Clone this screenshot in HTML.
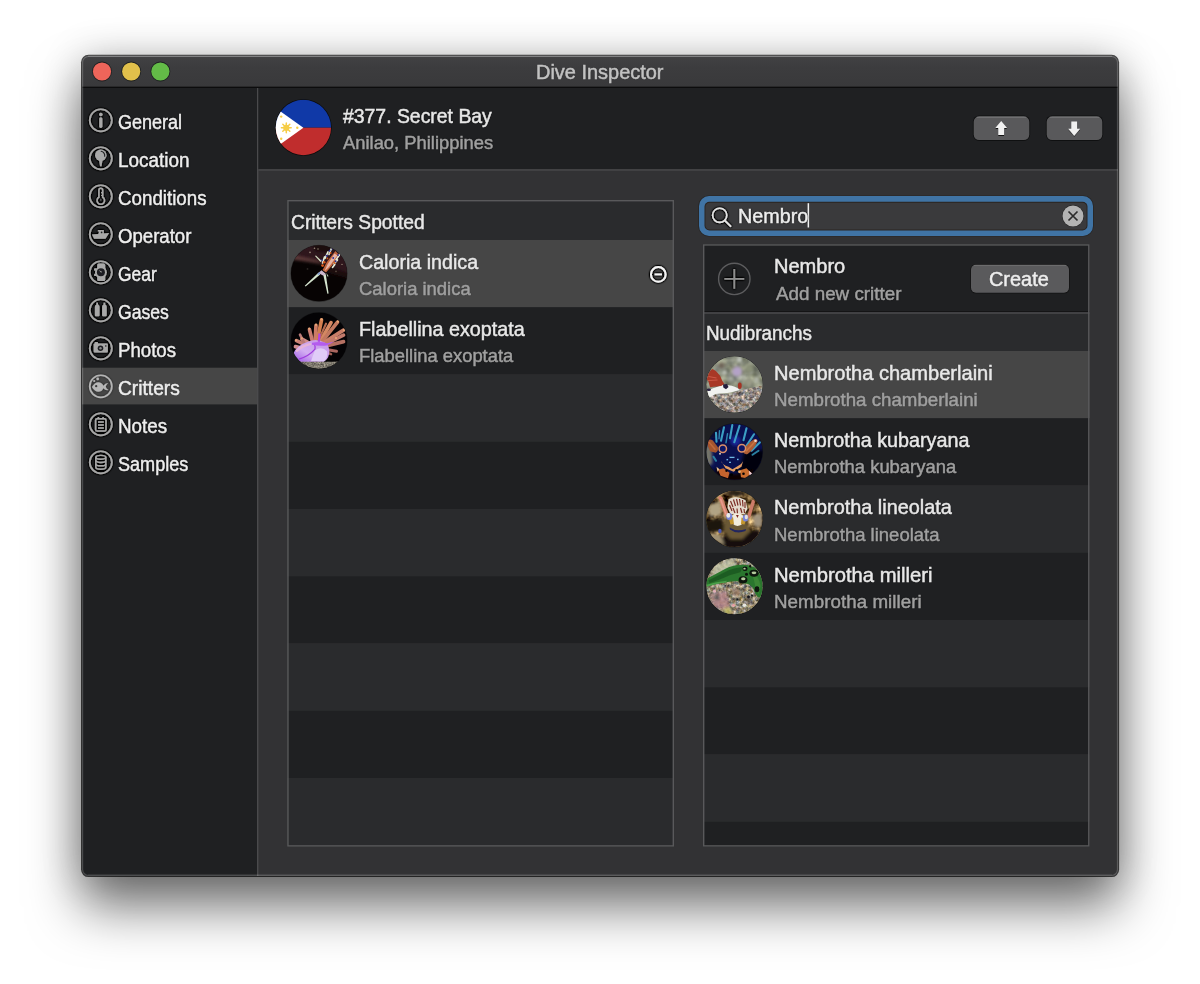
<!DOCTYPE html>
<html lang="en">
<head>
<meta charset="utf-8">
<title>Dive Inspector</title>
<style>
*{box-sizing:border-box;margin:0;padding:0}
html,body{width:1200px;height:984px;overflow:hidden;background:#fff}
body{font-family:"Liberation Sans",sans-serif;position:relative}
#shadow{position:absolute;left:82px;top:56px;width:1036px;height:820px;border-radius:7px;background:#323234;
 box-shadow:0 31px 52px 1px rgba(0,0,0,.52),0 2px 40px rgba(0,0,0,.24)}
#ui{position:absolute;left:0;top:0;display:block}
#txt{position:absolute;left:0;top:0;width:1200px;height:984px}
.t{position:absolute;white-space:nowrap;transform-origin:0 50%;line-height:24px;
 text-shadow:0 0 1.3px rgba(0,0,0,.85),0 0 1px rgba(0,0,0,.6);filter:grayscale(1);-webkit-text-stroke:.5px currentColor}
.t.hl{text-shadow:0 0 1.4px #000,0 0 1.4px #000,0 0 1px #000}
.t.sel{text-shadow:0 0 1.2px rgba(0,0,0,.45)}
</style>
</head>
<body>
<div id="shadow"></div>
<svg id="ui" width="1200" height="984" viewBox="0 0 1200 984">
<defs>
<clipPath id="winclip"><rect x="82" y="55.7" width="1036.1" height="820.4" rx="6.5"/></clipPath>
<clipPath id="tclip"><circle cx="28" cy="28" r="28.1"/></clipPath>
<linearGradient id="tbg" x1="0" y1="0" x2="0" y2="1"><stop offset="0" stop-color="#424244"/><stop offset=".4" stop-color="#3c3c3e"/><stop offset="1" stop-color="#39393b"/></linearGradient>
<filter id="halo" x="-30%" y="-30%" width="160%" height="160%"><feGaussianBlur in="SourceAlpha" stdDeviation=".8" result="b"/><feComponentTransfer in="b" result="b2"><feFuncA type="linear" slope="3.2"/></feComponentTransfer><feFlood flood-color="#000" flood-opacity=".95"/><feComposite in2="b2" operator="in" result="s"/><feMerge><feMergeNode in="s"/><feMergeNode in="SourceGraphic"/></feMerge></filter>
<filter id="bsh" x="-20%" y="-30%" width="140%" height="170%"><feGaussianBlur in="SourceAlpha" stdDeviation=".5" result="b"/><feOffset in="b" dy=".8" result="o"/><feFlood flood-color="#000" flood-opacity=".8"/><feComposite in2="o" operator="in" result="s"/><feMerge><feMergeNode in="s"/><feMergeNode in="SourceGraphic"/></feMerge></filter>
<filter id="halo2" x="-30%" y="-30%" width="160%" height="160%"><feGaussianBlur in="SourceAlpha" stdDeviation=".8" result="b"/><feComponentTransfer in="b" result="b2"><feFuncA type="linear" slope="2"/></feComponentTransfer><feFlood flood-color="#000" flood-opacity=".32"/><feComposite in2="b2" operator="in" result="s"/><feMerge><feMergeNode in="s"/><feMergeNode in="SourceGraphic"/></feMerge></filter>
</defs>
<rect x="81" y="54.7" width="1038.1" height="822.4" rx="7.5" fill="#000" fill-opacity=".7"/>
<g clip-path="url(#winclip)">
<rect x="82" y="55.7" width="1036.1" height="820.4" fill="#323234"/>
<rect x="82" y="55.7" width="1036.1" height="31" fill="url(#tbg)"/>
<rect x="82" y="86.7" width="1036.1" height="1.3" fill="#0c0c0d"/>
<rect x="82" y="88" width="175" height="788.1" fill="#1f2022"/>
<rect x="82" y="367.7" width="175" height="36.7" fill="#464646"/>
<rect x="257" y="88" width="1.4" height="788.1" fill="#4a4a4c"/>
<rect x="258.4" y="88" width="859.7" height="81.2" fill="#1f2022"/>
<rect x="258.4" y="169.2" width="859.7" height="1.5" fill="#48484a"/>
<circle cx="102" cy="71.5" r="9.9" fill="#101416" fill-opacity=".7"/><circle cx="102" cy="71.5" r="9.1" fill="#ee655a"/>
<circle cx="131.2" cy="71.5" r="9.9" fill="#101416" fill-opacity=".7"/><circle cx="131.2" cy="71.5" r="9.1" fill="#e1c04b"/>
<circle cx="160.4" cy="71.5" r="9.9" fill="#101416" fill-opacity=".7"/><circle cx="160.4" cy="71.5" r="9.1" fill="#63bb47"/>
<g transform="translate(100.8 120.3)" filter="url(#halo)"><circle r="11.05" fill="none" stroke="#a6a6a6" stroke-width="1.7"/><g fill="#a8a8a8"><circle cx="0" cy="-5.7" r="1.75"/><rect x="-1.55" y="-3.1" width="3.1" height="10.7" rx="1.55"/></g></g>
<g transform="translate(100.8 158.3)" filter="url(#halo)"><circle r="11.05" fill="none" stroke="#a6a6a6" stroke-width="1.7"/><g fill="#a8a8a8"><circle cx="0" cy="-3" r="5.7"/><path d="M-1.7,1.6 L-0.75,8 H0.75 L1.7,1.6 Z"/></g><path d="M0.4,-7 A4.3,4.3 0 0 1 3.9,-2" fill="none" stroke="#1b1c1e" stroke-width="1.1" stroke-linecap="round"/></g>
<g transform="translate(100.8 196.3)" filter="url(#halo)"><circle r="11.05" fill="none" stroke="#a6a6a6" stroke-width="1.7"/><g fill="none" stroke="#a8a8a8" stroke-width="1.5"><path d="M-1.9,0.95 V-6.1 a1.9,1.9 0 0 1 3.8,0 V0.95 A3.75,3.75 0 1 1 -1.9,0.95 Z"/><path d="M0.3,-3.6 H1.9 M0.3,-0.8 H1.9" stroke-width="1.2"/></g><rect x="-0.45" y="2.6" width=".9" height="1.8" fill="#6a6a6c"/></g>
<g transform="translate(100.8 234.3)" filter="url(#halo)"><circle r="11.05" fill="none" stroke="#a6a6a6" stroke-width="1.7"/><g fill="#a8a8a8"><path d="M-8.8,0.2 L-2.4,-0.4 L-1.6,-2.9 H-2.9 V-4.3 H3 V-0.9 L8.3,-1.4 L4.7,4.4 H-6.7 Z"/></g><circle cx="0.8" cy="-1.9" r="0.85" fill="#1f2022"/></g>
<g transform="translate(100.8 272.3)" filter="url(#halo)"><circle r="11.05" fill="none" stroke="#a6a6a6" stroke-width="1.7"/><g fill="#a8a8a8"><rect x="-3.6" y="-8.9" width="8" height="17.6" rx="1.6"/><circle cx="0.1" cy="0" r="5.9"/><circle cx="-5.6" cy="-2.8" r="1.2"/><circle cx="-5.6" cy="2.6" r="1.2"/></g><circle cx="0.1" cy="0" r="4" fill="#1d1e20"/><path d="M0.4,0.4 L-2.2,-2.4 L1.2,-0.5 Z" fill="#a8a8a8"/></g>
<g transform="translate(100.8 310.3)" filter="url(#halo)"><circle r="11.05" fill="none" stroke="#a6a6a6" stroke-width="1.7"/><g fill="#a8a8a8"><path d="M-5.9,-3.6 Q-5.9,-5.2 -4.4,-5.9 V-7.6 H-2.8 V-5.9 Q-1.3,-5.2 -1.3,-3.6 V4.9 Q-1.3,5.9 -2.3,5.9 H-4.9 Q-5.9,5.9 -5.9,4.9 Z"/><path d="M1.3,-3.6 Q1.3,-5.2 2.8,-5.9 V-7.6 H4.4 V-5.9 Q5.9,-5.2 5.9,-3.6 V4.9 Q5.9,5.9 4.9,5.9 H2.3 Q1.3,5.9 1.3,4.9 Z"/></g></g>
<g transform="translate(100.8 348.3)" filter="url(#halo)"><circle r="11.05" fill="none" stroke="#a6a6a6" stroke-width="1.7"/><g fill="#a8a8a8"><rect x="-7.1" y="-4.8" width="14.2" height="9" rx="1.1"/><rect x="-6.1" y="-6.2" width="3.4" height="2.4" rx="0.8"/></g><circle cx="-0.3" cy="-0.1" r="2.8" fill="#1d1e20"/><circle cx="-0.3" cy="-0.1" r="1.2" fill="#8a8a8a"/><rect x="4.2" y="-3.1" width="1.5" height="1.5" fill="#3a3a3c"/></g>
<g transform="translate(100.8 386.3)" filter="url(#halo2)"><circle r="11.05" fill="none" stroke="#b4b4b4" stroke-width="1.7"/><g fill="#b6b6b6"><path d="M-8.9,0.7 Q-6,-4.1 -2.6,-4.1 Q1.2,-4.1 2.6,-0.6 Q4.6,-3.4 7.3,-3.2 Q5.2,-1.2 4.9,0.5 Q5.4,2.4 7.7,3.8 Q4.4,4.4 2.6,2 Q1.2,5.5 -2.6,5.5 Q-6,5.5 -8.9,0.7 Z"/><circle cx="-3.1" cy="-7.4" r="1.35"/><circle cx="-6.6" cy="-5.3" r="1"/></g><circle cx="-4.6" cy="-0.1" r="1.15" fill="#3a3a3a"/></g>
<g transform="translate(100.8 424.3)" filter="url(#halo)"><circle r="11.05" fill="none" stroke="#a6a6a6" stroke-width="1.7"/><g fill="none" stroke="#a8a8a8" stroke-width="1.5"><rect x="-5.2" y="-5.6" width="10.4" height="12.4" rx="1.6"/><path d="M-2.4,-7.4 V-5.6 M2.3,-7.4 V-5.6" stroke-width="1.4"/><path d="M-2.8,-2.3 H3 M-2.8,0.7 H3 M-2.8,3.7 H3" stroke-width="1.3"/></g></g>
<g transform="translate(100.8 462.3)" filter="url(#halo)"><circle r="11.05" fill="none" stroke="#a6a6a6" stroke-width="1.7"/><g fill="none" stroke="#a8a8a8" stroke-width="1.4"><ellipse cx="0" cy="-5" rx="5" ry="1.9"/><path d="M-5,-5 V5 A5,1.9 0 0 0 5,5 V-5"/><path d="M-5,-1.7 A5,1.9 0 0 0 5,-1.7 M-5,1.6 A5,1.9 0 0 0 5,1.6"/></g></g>
<g transform="translate(275.4 99.5)"><defs><clipPath id="fc"><circle cx="28" cy="28" r="27.7"/></clipPath></defs><circle cx="28" cy="28" r="28.3" fill="#0a0a0b"/><g clip-path="url(#fc)"><rect x="0" y="0" width="56" height="28.2" fill="#1039a7"/><rect x="0" y="28.2" width="56" height="28" fill="#c02d2d"/><path d="M-20,-6 L28,28.2 L-20,62.4 Z" fill="#ffffff"/><g fill="#f6cd46"><circle cx="10.9" cy="28.3" r="3.1"/><g stroke="#f6cd46" stroke-width="1.5" stroke-linecap="round"><path d="M10.9,23.4 V33.2 M6,28.3 H15.8 M7.4,24.8 L14.4,31.8 M14.4,24.8 L7.4,31.8"/></g><circle cx="5.8" cy="17.1" r="1.2"/><circle cx="21.9" cy="28.2" r="1.2"/><circle cx="5.8" cy="39.2" r="1.2"/></g></g></g>
<g><rect x="972.9" y="115.5" width="57.2" height="25.4" rx="6.3" fill="#0b0b0c" fill-opacity=".75"/><rect x="973.7" y="116.3" width="55.6" height="23.7" rx="5.5" fill="#59595b"/><rect x="976.5" y="116.6" width="50" height="1.1" fill="#fff" fill-opacity=".2"/><rect x="1045.9" y="115.5" width="57.2" height="25.4" rx="6.3" fill="#0b0b0c" fill-opacity=".75"/><rect x="1046.7" y="116.3" width="55.6" height="23.7" rx="5.5" fill="#59595b"/><rect x="1049.5" y="116.6" width="50" height="1.1" fill="#fff" fill-opacity=".2"/><g filter="url(#bsh)" fill="#f1f1f1"><path transform="translate(1001.2 116.3)" d="M0,4.7 L5.9,11.7 H2.85 V18.8 H-2.85 V11.7 H-5.9 Z"/><path transform="translate(1074.2 116.3)" d="M0,19.4 L5.9,12.4 H2.85 V5.3 H-2.85 V12.4 H-5.9 Z"/></g></g>
<rect x="287.25" y="200" width="386.75" height="40" fill="#2a2b2d"/><rect x="287.25" y="240" width="386.75" height="67.25" fill="#464646"/><rect x="287.25" y="307.25" width="386.75" height="67.25" fill="#1f2022"/><rect x="287.25" y="374.5" width="386.75" height="67.25" fill="#2a2b2d"/><rect x="287.25" y="441.75" width="386.75" height="67.25" fill="#1f2022"/><rect x="287.25" y="509" width="386.75" height="67.25" fill="#2a2b2d"/><rect x="287.25" y="576.25" width="386.75" height="67.25" fill="#1f2022"/><rect x="287.25" y="643.5" width="386.75" height="67.25" fill="#2a2b2d"/><rect x="287.25" y="710.75" width="386.75" height="67.25" fill="#1f2022"/><rect x="287.25" y="778" width="386.75" height="68.6" fill="#2a2b2d"/>
<rect x="703" y="244.25" width="386.5" height="68.75" fill="#1f2022"/><rect x="703" y="313" width="386.5" height="38" fill="#2a2b2d"/><rect x="703" y="351" width="386.5" height="67.25" fill="#464646"/><rect x="703" y="418.25" width="386.5" height="67.25" fill="#1f2022"/><rect x="703" y="485.5" width="386.5" height="67.25" fill="#2a2b2d"/><rect x="703" y="552.75" width="386.5" height="67.25" fill="#1f2022"/><rect x="703" y="620" width="386.5" height="67.25" fill="#2a2b2d"/><rect x="703" y="687.25" width="386.5" height="67.25" fill="#1f2022"/><rect x="703" y="754.5" width="386.5" height="67.25" fill="#2a2b2d"/><rect x="703" y="821.75" width="386.5" height="24.85" fill="#1f2022"/>
<rect x="703" y="311.2" width="386.5" height="0.9" fill="#121213"/>
<rect x="703" y="312.1" width="386.5" height="1.8" fill="#454547"/>
<rect x="287.95" y="200.7" width="385.35" height="645.2" fill="none" stroke="#59595b" stroke-width="1.4"/>
<rect x="703.7" y="244.95" width="385.1" height="600.95" fill="none" stroke="#59595b" stroke-width="1.4"/>
<g transform="translate(291 245.4)"><circle cx="28" cy="28" r="28.6" fill="#000" fill-opacity=".35"/><g clip-path="url(#tclip)"><defs><filter id="b1" x="-20%" y="-20%" width="140%" height="140%"><feGaussianBlur stdDeviation="0.6"/></filter><filter id="b2" x="-30%" y="-30%" width="160%" height="160%"><feGaussianBlur stdDeviation="1.7"/></filter><filter id="b3" x="-30%" y="-30%" width="160%" height="160%"><feGaussianBlur stdDeviation="1"/></filter><filter id="b4" x="-30%" y="-30%" width="160%" height="160%"><feGaussianBlur stdDeviation=".75"/></filter></defs>
<rect width="56" height="56" fill="#070303"/>
<g filter="url(#b2)"><path d="M-2,-2 H58 V27.5 L30,18.5 L4,11.5 L-2,13 Z" fill="#2d191a"/><path d="M2,9.5 L26,15 L31,18.5 L12,15.5 L1,14 Z" fill="#5e3a3a"/><path d="M34,22 L58,27 V33 L36,27 Z" fill="#1d0f10"/><path d="M20,-2 H44 L40,8 L24,6 Z" fill="#1c0f10"/></g>
<g filter="url(#b1)"><g fill="#9a8a7a"><circle cx="19" cy="7" r=".8"/><circle cx="23.5" cy="2.8" r=".8"/><circle cx="27" cy="3.6" r=".7"/><circle cx="51" cy="19" r=".7"/><circle cx="45" cy="26" r=".8" fill="#5a4a40"/><circle cx="16.5" cy="23.5" r=".9" fill="#2c2622"/></g>
<path d="M44.5,5.5 L48,9.5 L41,20 L35,27 L31.5,24.5 L36.5,15.5 Z" fill="#c2653e"/><path d="M43.5,8 L46.3,10.2 L38,21.5 L33.5,25.8 L36.5,19 Z" fill="#e4b4a6"/>
<g stroke="#e6eedc" stroke-width="1.6" stroke-linecap="round" fill="none"><path d="M40.5,3 L38,9"/><path d="M37,6.5 L34,13"/><path d="M33.5,11.5 L31.5,17.5"/><path d="M48.5,9.5 L45,14.5"/><path d="M46.5,14.5 L43,18.5"/><path d="M49.5,7 L47.5,10.5"/><path d="M43.8,19 L41.5,22"/></g>
<g fill="#2e2f92"><circle cx="41.5" cy="3.2" r="1.05"/><circle cx="38.6" cy="5.3" r=".95"/><circle cx="35.8" cy="10.3" r="1.05"/><circle cx="42.2" cy="12.6" r=".9"/><circle cx="30.6" cy="14.8" r="1.05"/><circle cx="47" cy="9.6" r=".95"/><circle cx="44.7" cy="15.8" r=".95"/><circle cx="49.6" cy="6.4" r=".8"/></g>
<g fill="#d4581c"><circle cx="39.6" cy="7.6" r="1.05"/><circle cx="33.2" cy="16.8" r="1.3"/><circle cx="47.6" cy="5.4" r=".9"/><circle cx="43.6" cy="17.6" r=".95"/><circle cx="31.6" cy="20.2" r="1.4"/><circle cx="36.4" cy="13" r=".9"/></g>
<path d="M29.5,16.5 L24,10.5 L24.9,10.2 L30.8,15.6 Z" fill="#d9e4c8"/><path d="M27.6,27.2 L13.8,40.4 L14.6,41 L29.2,29 Z" fill="#d6e6d0"/><path d="M32.2,29 L36.4,48.3 L37.6,48 L34.8,28.8 Z" fill="#d6e6d0"/><path d="M35.3,27.4 L37.6,30.8 L36.3,31.2 Z" fill="#c5d8c0"/><path d="M27.4,27.6 L30.5,24.8 L35,28.6 L32.4,30.4 Z" fill="#cdb8cc"/><path d="M26,28.8 L29.4,26 L28.2,29.6 Z" fill="#7f9ad8"/></g></g></g>
<g transform="translate(291 312.65)"><circle cx="28" cy="28" r="28.6" fill="#000" fill-opacity=".35"/><g clip-path="url(#tclip)"><defs><filter id="n2" x="0" y="0" width="100%" height="100%" color-interpolation-filters="sRGB"><feTurbulence type="fractalNoise" baseFrequency="0.6" numOctaves="2" seed="3"/><feColorMatrix values="1.1 0 0 0 0  1.05 0 0 0 0  0.95 0 0 0 0  0 0 0 0 1"/></filter><linearGradient id="g2a" x1="0" y1="1" x2="1" y2="0"><stop offset="0" stop-color="#9c55e4"/><stop offset=".4" stop-color="#d3aef2"/><stop offset="1" stop-color="#c392e6"/></linearGradient></defs>
<rect width="56" height="56" fill="#040305"/>
<g filter="url(#b4)"><g stroke-linecap="round" fill="none" stroke-width="3.7"><path d="M26,29 L30.5,7.5" stroke="#d27e50"/><path d="M24,30 L25,13" stroke="#cc7c66"/><path d="M22,31 L18.5,17" stroke="#c97c70"/><path d="M29,29 L40,10" stroke="#d48862"/><path d="M31,29 L46.5,9.5" stroke="#c2785e"/><path d="M32,30.5 L52.5,17.5" stroke="#c97e68"/><path d="M33,32 L52.5,22.5" stroke="#c27a6c"/><path d="M34,33.5 L52.5,29" stroke="#b47062"/><path d="M34,36.5 L45.5,38.5" stroke="#a8665e" stroke-width="3"/><path d="M20,31.5 L11,26.5" stroke="#d08c88"/><path d="M17,33.5 L5.5,28" stroke="#c78074"/><path d="M14,36.5 L4.5,34" stroke="#cf8c8c"/><path d="M36,40 L40,41.5" stroke="#a06054" stroke-width="2.6"/><path d="M27,29 L35,11" stroke="#b46a50" stroke-width="2.2"/><path d="M14,32 L9,22" stroke="#b87a78" stroke-width="2.6"/></g>
<g fill="#e8a474"><circle cx="30.6" cy="6.6" r="1.2"/><circle cx="25" cy="12" r="1.2"/><circle cx="18.2" cy="16" r="1.1"/><circle cx="47" cy="8.8" r="1.2"/><circle cx="53" cy="17.2" r="1.2"/><circle cx="45" cy="25.4" r="1.1"/><circle cx="5" cy="27.6" r="1.1"/><circle cx="10.8" cy="25.8" r="1.1"/></g></g>
<g filter="url(#b4)"><path d="M2.5,40.5 Q6,32.5 17,29 Q26,25.5 34,30 Q39.5,33.5 38,41.5 Q37,47 32,49.5 L10,49.5 Q4,46.5 2.5,40.5 Z" fill="url(#g2a)"/><path d="M21,30 Q30,28.5 36,30.5 L43,29 L36,32.8 Q28,33.8 21,32.2 Z" fill="#b45cee"/><path d="M27.4,20.5 L29.6,21 L29,29 L26.8,29 Z" fill="#b344e4"/><path d="M8,46.5 Q18,43.5 24,36.5 Q24.5,33.5 23.5,32.5" fill="none" stroke="#a03ede" stroke-width="1.3"/><path d="M24,37.5 Q31,33.5 36,38.5 Q37,44.5 33,48.5 L20,48.5 Q22,42.5 24,37.5 Z" fill="#e0ccf8"/><path d="M6,38 Q12,33 19,31.5" fill="none" stroke="#e6b4d8" stroke-width="2.4" stroke-linecap="round"/></g>
<g clip-path="polygon(0 87.5%, 100% 87.5%, 100% 100%, 0 100%)"><rect width="56" height="56" filter="url(#n2)"/><rect width="56" height="56" fill="#6a665e" opacity=".35"/></g></g></g>
<g transform="translate(706.5 356.5)"><circle cx="28" cy="28" r="28.6" fill="#000" fill-opacity=".35"/><g clip-path="url(#tclip)"><defs><filter id="n3" x="0" y="0" width="100%" height="100%" color-interpolation-filters="sRGB"><feTurbulence type="fractalNoise" baseFrequency="0.11" numOctaves="2" seed="8"/><feColorMatrix values="0.6 0.1 0 0 0.2  0.6 0.1 0 0 0.22  0.55 0 0.1 0 0.17  0 0 0 0 1"/></filter><filter id="n3b" x="0" y="0" width="100%" height="100%" color-interpolation-filters="sRGB"><feTurbulence type="fractalNoise" baseFrequency="0.28" numOctaves="3" seed="21"/><feColorMatrix values="0.95 0.35 0 0 -0.07  0.95 0.1 0 0 0.02  0.95 0 0.25 0 -0.08  0 0 0 0 1"/></filter></defs>
<rect width="56" height="56" fill="#8c9182"/><rect width="56" height="56" filter="url(#n3)" opacity=".9"/>
<g filter="url(#b2)"><circle cx="30.5" cy="15" r="5" fill="#b4a2c8"/><circle cx="18" cy="16" r="2.4" fill="#c2c6bc"/><circle cx="24" cy="22" r="2" fill="#bcc0b4"/><circle cx="33" cy="3" r="2.6" fill="#c8ccc2"/><circle cx="50" cy="23" r="2.4" fill="#b4b8ae"/><circle cx="15" cy="9" r="3" fill="#6c6054"/><circle cx="43" cy="12" r="4" fill="#8a9078"/><circle cx="42" cy="26" r="3" fill="#9a9a86"/></g>
<g clip-path="polygon(0 75%, 12% 68%, 46% 66%, 62% 60%, 100% 52%, 100% 100%, 0 100%)"><rect width="56" height="56" filter="url(#n3b)"/></g>
<g filter="url(#b1)"><path d="M1,34 Q8,31 16,28.5 Q25,28 31,31.5 L33,33.5 Q27,35.5 21,36.5 L9,37.5 L3,41 L0.5,37 Z" fill="#f1f2f0"/><path d="M3.5,30.8 L2,25 L-0.5,22 L0.5,16.5 L6,12.4 L9.4,14.6 L13.6,19.3 L15.6,24 L18,27.6 L14.5,29.4 L9,30 Z" fill="#a83826"/><path d="M2,20 L10,21.5 M1.5,24 L11,23.5" stroke="#cc5a48" stroke-width="1.1" fill="none"/><path d="M16.5,28 L20.5,27.5 L22,30.5 L19.5,32.8 L16.8,31 Z" fill="#241d3c"/><ellipse cx="2.3" cy="33.3" rx="2.2" ry="1.2" fill="#2a2440"/><ellipse cx="33.3" cy="29.2" rx="1.9" ry="3.3" fill="#a53222"/></g></g></g>
<g transform="translate(706.5 423.75)"><circle cx="28" cy="28" r="28.6" fill="#000" fill-opacity=".35"/><g clip-path="url(#tclip)"><rect width="56" height="56" fill="#091050"/>
<g filter="url(#b2)"><path d="M38,28 L58,26 V58 H30 Z" fill="#030509"/><path d="M-2,22 L5,22 L6,40 L-2,44 Z" fill="#75756a"/><circle cx="29" cy="17" r="5" fill="#18289a"/><path d="M8,44 L20,50 L36,50 L48,44 L44,58 H12 Z" fill="#080505"/><path d="M-2,-2 H20 L10,14 L-2,16 Z" fill="#0b1030"/></g>
<g filter="url(#b1)"><g stroke="#3b9fc4" stroke-width="2.1" stroke-linecap="round" fill="none"><path d="M17.5,3.5 L14.5,17"/><path d="M25.8,1.4 L23.5,14.5"/><path d="M33,2 L27.8,18.5"/><path d="M40,4.5 L37,16.5"/><path d="M47.5,10.5 L40,22"/><path d="M53.5,18.5 L45,27"/><path d="M9.5,9 L10,18"/><path d="M52,27 L46,31" stroke="#2a7fa0"/><path d="M7,33 L9.5,37" stroke="#2a7fa0"/><path d="M21,10 L19.5,19" stroke="#2f86b0" stroke-width="1.5"/><path d="M13,7 L12.5,15" stroke="#2f86b0" stroke-width="1.4"/></g>
<path d="M0.8,16.8 Q3.4,14.6 6.4,16.8 L11.4,23.6 Q12,27.8 9.2,29 L3.6,27.4 Q0.4,22 0.8,16.8 Z" fill="#a4542e"/><path d="M2.5,18.5 L8.5,25.5" stroke="#c06a3c" stroke-width="1.6" stroke-linecap="round"/><path d="M36.6,27.8 Q39.6,20.6 47.6,15.6 Q50.6,14.6 51.2,17.2 Q47.6,25.6 41.2,30.2 Q37.6,31.2 36.6,27.8 Z" fill="#ac5c34"/><path d="M40,27 L48,18.5" stroke="#c87444" stroke-width="1.6" stroke-linecap="round"/><circle cx="49" cy="17" r="1.3" fill="#f2e0dc"/>
<circle cx="16.3" cy="25" r="3.7" fill="#0d1565" stroke="#dd9068" stroke-width="1.5"/><circle cx="35.3" cy="24.5" r="3.8" fill="#0d1565" stroke="#dd9068" stroke-width="1.5"/>
<g fill="#6fb8e6"><rect x="23" y="33" width="5" height="1.3"/><rect x="20" y="35.2" width="1.6" height="1.4"/><rect x="30.5" y="35" width="1.6" height="1.4"/><rect x="22.5" y="38" width="2" height="1.2"/></g>
<path d="M14.5,37 Q15.5,41 22,43 L26,45.5 L31,42.5 Q35,41 36.5,37.5 L35,43 L27,48 L19,44.5 Z" fill="#e49c62"/><path d="M11.5,46 L17,44.5 L23,49 L21.5,54.5 L14,52 Z" fill="#c4642e"/><path d="M33.5,46.5 L40,44.5 L44.5,49 L40,54.5 L34.5,53.5 Z" fill="#cb6e2f"/><circle cx="33" cy="48" r="1.4" fill="#f0b06a"/><path d="M42.5,47 L46,50 L43,52 Z" fill="#f2d0d6"/><path d="M10,43 L13,45.5 L11,48 Z" fill="#e8c090"/><circle cx="13.5" cy="30" r=".9" fill="#e8e0d0"/><g fill="#060406"><circle cx="20" cy="47" r="1.2"/><circle cx="25" cy="51" r="1.6"/><circle cx="37" cy="50" r="1.3"/><circle cx="30" cy="46.5" r="1.3"/></g></g></g></g>
<g transform="translate(706.5 491)"><circle cx="28" cy="28" r="28.6" fill="#000" fill-opacity=".35"/><g clip-path="url(#tclip)"><defs><filter id="n5" x="0" y="0" width="100%" height="100%" color-interpolation-filters="sRGB"><feTurbulence type="fractalNoise" baseFrequency="0.12" numOctaves="3" seed="14"/><feColorMatrix values="1.9 0 0 0 -0.5  1.7 0 0 0 -0.5  1.3 0 0 0 -0.45  0 0 0 0 1"/></filter></defs>
<rect width="56" height="56" fill="#6b5a3a"/><rect width="56" height="56" filter="url(#n5)"/>
<g filter="url(#b2)"><path d="M-2,30 L16,27 L18,40 L-2,41 Z" fill="#1f180e"/><path d="M10,50 L24,40 L40,42 L52,38 L58,58 H8 Z" fill="#120d08"/><path d="M18,28 Q28,22 40,28 L44,40 L36,48 L24,48 L17,40 Z" fill="#6a5836"/><path d="M2,14 L14,10 L15,24 L3,26 Z" fill="#b0a384"/><path d="M1,42 L14,44 L18,54 L6,50 Z" fill="#a09274"/><path d="M46,24 L56,22 L56,36 L48,36 Z" fill="#a0937e"/><path d="M16,2 L30,-2 L40,2 L30,6 Z" fill="#2a2016"/></g>
<g filter="url(#b1)"><path d="M22,8 Q30,4 39,9 L41,18 L38,23 L24,23 L21,17 Z" fill="#e4dacc"/><g stroke="#7a2a22" stroke-width="1.15" fill="none"><path d="M24,10 L26.5,16"/><path d="M27,8.5 L29,15"/><path d="M30,8 L31.5,14.5"/><path d="M33,8 L34,14.5"/><path d="M36,9 L36.5,15.5"/><path d="M38.5,11 L38.5,17"/><path d="M23,14 L25.5,20"/><path d="M26.5,17 L28.5,22"/><path d="M34,17 L35.5,22"/><path d="M30.5,17.5 L31,22.5"/><path d="M37.5,18 L38,22"/></g>
<path d="M11.5,6 Q14,4.5 16,6.5 L22.5,24 Q21,26.5 18.5,25 Z" fill="#d4826e"/><path d="M45.5,9 Q48,8 48.5,11 L44,26 Q42,28 40.5,25.5 Z" fill="#cd7b68"/><path d="M13,7.5 L15,8 L20,23 L18.8,23.5 Z" fill="#e69c8c"/>
<path d="M24,27 Q26,22 31,22.5 Q36,22 38,27 Q37.5,34 31,35 Q25,34 24,27 Z" fill="#f2ecdc"/><path d="M22.5,28 L26.5,26 L27.5,33 L24,33.5 Z" fill="#c4962f"/><path d="M35,26.5 L39.5,28.5 L38,33.5 L34.5,33 Z" fill="#c4962f"/><ellipse cx="22.8" cy="25.6" rx="3" ry="3.5" fill="#7884d8"/><ellipse cx="21.8" cy="24.4" rx="1.9" ry="2.3" fill="#eeece6"/><ellipse cx="39" cy="27" rx="2.8" ry="3.5" fill="#7884d8"/><ellipse cx="39.8" cy="26" rx="1.6" ry="2.2" fill="#e6e2de"/>
<path d="M23,36.5 Q30,41 39.5,38 L39,40 Q30,43.5 23.5,38.5 Z" fill="#24265e"/><ellipse cx="13.4" cy="40" rx="1.7" ry="2.2" fill="#4a56b0"/><path d="M29.5,24 L31,27 L32.2,24" fill="#7a2a22"/></g></g></g>
<g transform="translate(706.5 558.25)"><circle cx="28" cy="28" r="28.6" fill="#000" fill-opacity=".35"/><g clip-path="url(#tclip)"><defs><filter id="n6" x="0" y="0" width="100%" height="100%" color-interpolation-filters="sRGB"><feTurbulence type="fractalNoise" baseFrequency="0.3" numOctaves="3" seed="5"/><feColorMatrix values="0.9 0.4 0 0 -0.09  0.9 0.15 0 0 0.005  0.9 0 0.3 0 -0.15  0 0 0 0 1"/></filter></defs>
<rect width="56" height="56" fill="#8e8872"/><rect width="56" height="56" filter="url(#n6)"/>
<g filter="url(#b2)" opacity=".8"><path d="M4,8 L26,0 L30,10 L8,20 Z" fill="#c6c8aa"/><path d="M3,36 L20,32 L24,52 L8,50 Z" fill="#b8868c"/><circle cx="21" cy="53" r="4" fill="#c0ba60"/><circle cx="10" cy="39" r="3" fill="#54585c"/><circle cx="42" cy="41" r="2.5" fill="#3a3038"/><circle cx="30" cy="34" r="4" fill="#9a7a6a"/></g>
<g filter="url(#b1)"><path d="M-1,21 Q9,16 18,11 Q26,6.5 35,6.5 Q44,6 49,10 Q54,14 55.5,22 Q57,30 55,39.5 L51.5,39 Q48.5,36 47,31 Q45,26.5 40.5,25.5 Q35,25.5 32,23 Q26,22.5 20,24 Q11,24.5 5,27 L-1,28 Z" fill="#2c762d"/><path d="M2,22 Q12,17 22,12 Q30,9 36,9 L34,14 Q24,16 14,21 L3,25 Z" fill="#1f5c24"/><path d="M48,16 Q53,20 54,28 L52,36 L49,30 Q48,22 46,18 Z" fill="#3a8636"/><path d="M0,26.5 Q10,23.5 20,22.5 L20,24 Q10,25 0,28.5 Z" fill="#49a04a"/>
<g fill="#0b120c"><ellipse cx="38.5" cy="10.5" rx="2.6" ry="2.2"/><ellipse cx="47.5" cy="15" rx="4.6" ry="3.4"/><ellipse cx="36.5" cy="21.5" rx="4.4" ry="3.6"/><ellipse cx="50.5" cy="31" rx="2.3" ry="3"/><circle cx="44" cy="8" r="1.3"/><circle cx="40" cy="16" r="1.5"/></g><g fill="#b4ca9c"><ellipse cx="38" cy="10.4" rx="1.2" ry=".9"/><ellipse cx="47.5" cy="14.6" rx="2.4" ry="1.4"/><ellipse cx="36.8" cy="20.6" rx="2.2" ry="1.5"/><circle cx="45.5" cy="7.6" r=".9"/></g>
<g fill="#16181c"><circle cx="42" cy="38.5" r="1.5"/><circle cx="45.5" cy="37" r="1.1"/><circle cx="31" cy="41" r="1"/></g><circle cx="45.8" cy="35.3" r=".9" fill="#e6e6e6"/><circle cx="8" cy="33" r="1.6" fill="#e0b0b8"/><circle cx="27" cy="47" r="1.6" fill="#e6a0a8"/><circle cx="38" cy="47" r="1.8" fill="#e6e6e0"/></g></g></g>
<g transform="translate(658.3 274.4)" filter="url(#halo)"><circle r="7.35" fill="none" stroke="#f4f4f4" stroke-width="2"/><rect x="-3.7" y="-0.9" width="7.4" height="1.8" fill="#f4f4f4"/></g>
<g><rect x="698.3" y="195.4" width="395.4" height="41.2" rx="10.6" fill="#1c1714" fill-opacity=".5"/><rect x="699" y="196.1" width="394" height="39.9" rx="10" fill="#4074a5"/><rect x="704.5" y="201.8" width="383" height="28.7" rx="5" fill="#2a2421"/><rect x="705.4" y="202.7" width="381.2" height="26.9" rx="4.2" fill="#3a3a3c"/><g filter="url(#halo)" fill="none" stroke="#e4e4e4"><circle cx="719.7" cy="215.3" r="7.1" stroke-width="1.6"/><path d="M724.9,220.6 L730.5,226.2" stroke-width="1.9" stroke-linecap="round"/></g><rect x="807.6" y="203.2" width="1.5" height="24.3" fill="#f0f0f0"/><g transform="translate(1073 216)"><circle r="10.9" fill="#222"/><circle r="10.5" fill="#b3b3b3"/><path d="M-4.5,-4.5 L4.5,4.5 M4.5,-4.5 L-4.5,4.5" stroke="#2c2c2c" stroke-width="1.7" fill="none"/></g></g>
<g transform="translate(734.3 278.9)"><circle r="15.7" fill="none" stroke="#5c5c5e" stroke-width="1.4"/><path d="M-9.9,0 H9.9 M0,-9.9 V9.9" stroke="#8e8e8e" stroke-width="1.7" fill="none" filter="url(#halo)"/></g>
<g><rect x="970.2" y="264" width="99.6" height="29.6" rx="5.8" fill="#0b0b0c" fill-opacity=".6"/><rect x="971" y="264.8" width="98" height="28" rx="5" fill="#5a5a5c"/><rect x="973.5" y="264.8" width="93" height="1" fill="#fff" fill-opacity=".14"/></g>
</g>
<rect x="82.6" y="56.3" width="1034.9" height="819.2" rx="6" fill="none" stroke="#fff" stroke-opacity=".2" stroke-width="1.2"/>
<rect x="88" y="55.7" width="1024.1" height="1.3" fill="#fff" fill-opacity=".18"/>
<rect x="88" y="873.9" width="1024.1" height="1" fill="#fff" fill-opacity=".1"/>
</svg>
<div id="txt">
<span id="title" class="t sel" style="left:535.93px;top:60px;font-size:20.3px;color:#c2c2c2;transform:scaleX(0.9834);">Dive Inspector</span>
<span id="sb0" class="t hl" style="left:118.10px;top:110px;font-size:20px;color:#eeeeee;transform:scaleX(0.901);">General</span>
<span id="sb1" class="t hl" style="left:117.87px;top:148px;font-size:20px;color:#eeeeee;transform:scaleX(0.9472);">Location</span>
<span id="sb2" class="t hl" style="left:118.26px;top:186px;font-size:20px;color:#eeeeee;transform:scaleX(0.9372);">Conditions</span>
<span id="sb3" class="t hl" style="left:117.93px;top:224px;font-size:20px;color:#eeeeee;transform:scaleX(0.9293);">Operator</span>
<span id="sb4" class="t hl" style="left:117.98px;top:262px;font-size:20px;color:#eeeeee;transform:scaleX(0.8707);">Gear</span>
<span id="sb5" class="t hl" style="left:117.97px;top:300px;font-size:20px;color:#eeeeee;transform:scaleX(0.8803);">Gases</span>
<span id="sb6" class="t hl" style="left:117.89px;top:338px;font-size:20px;color:#eeeeee;transform:scaleX(0.9316);">Photos</span>
<span id="sb7" class="t sel" style="left:117.99px;top:376px;font-size:20px;color:#eeeeee;transform:scaleX(0.9587);">Critters</span>
<span id="sb8" class="t hl" style="left:117.87px;top:414px;font-size:20px;color:#eeeeee;transform:scaleX(0.9415);">Notes</span>
<span id="sb9" class="t hl" style="left:117.93px;top:452px;font-size:20px;color:#eeeeee;transform:scaleX(0.904);">Samples</span>
<span id="htitle" class="t " style="left:343.32px;top:104px;font-size:20.6px;color:#e8e8e8;transform:scaleX(0.9419);">#377. Secret Bay</span>
<span id="hsub" class="t " style="left:342.93px;top:131px;font-size:18.8px;color:#a0a0a0;transform:scaleX(0.9783);">Anilao, Philippines</span>
<span id="lhead" class="t " style="left:291.38px;top:210px;font-size:20px;color:#e8e8e8;transform:scaleX(0.9618);">Critters Spotted</span>
<span id="ln0" class="t sel" style="left:358.96px;top:250px;font-size:20.6px;color:#e8e8e8;transform:scaleX(0.9544);">Caloria indica</span>
<span id="ls0" class="t sel" style="left:358.90px;top:277px;font-size:18.8px;color:#a0a0a0;transform:scaleX(0.9815);">Caloria indica</span>
<span id="ln1" class="t " style="left:358.73px;top:317px;font-size:20.6px;color:#e8e8e8;transform:scaleX(0.9587);">Flabellina exoptata</span>
<span id="ls1" class="t " style="left:358.89px;top:344px;font-size:18.8px;color:#a0a0a0;transform:scaleX(0.9784);">Flabellina exoptata</span>
<span id="search" class="t hl" style="left:738.44px;top:204px;font-size:20.3px;color:#eeeeee;transform:scaleX(0.9747);">Nembro</span>
<span id="rnew" class="t " style="left:774.03px;top:254px;font-size:20.6px;color:#e8e8e8;transform:scaleX(0.9723);">Nembro</span>
<span id="rnews" class="t " style="left:775.61px;top:282px;font-size:18.8px;color:#a0a0a0;letter-spacing:0.015px;transform:scaleX(0.9996);">Add new critter</span>
<span id="createt" class="t sel" style="left:988.97px;top:267px;font-size:20px;color:#eeeeee;transform:scaleX(0.995);">Create</span>
<span id="rhead" class="t " style="left:706.32px;top:321px;font-size:20px;color:#e8e8e8;transform:scaleX(0.9423);">Nudibranchs</span>
<span id="rn0" class="t sel" style="left:774.43px;top:361px;font-size:20.6px;color:#e8e8e8;transform:scaleX(0.975);">Nembrotha chamberlaini</span>
<span id="rs0" class="t sel" style="left:774.07px;top:388px;font-size:18.8px;color:#a0a0a0;transform:scaleX(0.9956);">Nembrotha chamberlaini</span>
<span id="rn1" class="t " style="left:774.11px;top:428px;font-size:20.6px;color:#e8e8e8;transform:scaleX(0.9592);">Nembrotha kubaryana</span>
<span id="rs1" class="t " style="left:774.29px;top:455px;font-size:18.8px;color:#a0a0a0;transform:scaleX(0.9802);">Nembrotha kubaryana</span>
<span id="rn2" class="t " style="left:774.06px;top:495px;font-size:20.6px;color:#e8e8e8;transform:scaleX(0.9653);">Nembrotha lineolata</span>
<span id="rs2" class="t " style="left:774.25px;top:523px;font-size:18.8px;color:#a0a0a0;transform:scaleX(0.9846);">Nembrotha lineolata</span>
<span id="rn3" class="t " style="left:774.49px;top:563px;font-size:20.6px;color:#e8e8e8;transform:scaleX(0.9825);">Nembrotha milleri</span>
<span id="rs3" class="t " style="left:774.03px;top:590px;font-size:18.8px;color:#a0a0a0;letter-spacing:0.063px;transform:scaleX(0.9969);">Nembrotha milleri</span>
</div>
</body>
</html>
